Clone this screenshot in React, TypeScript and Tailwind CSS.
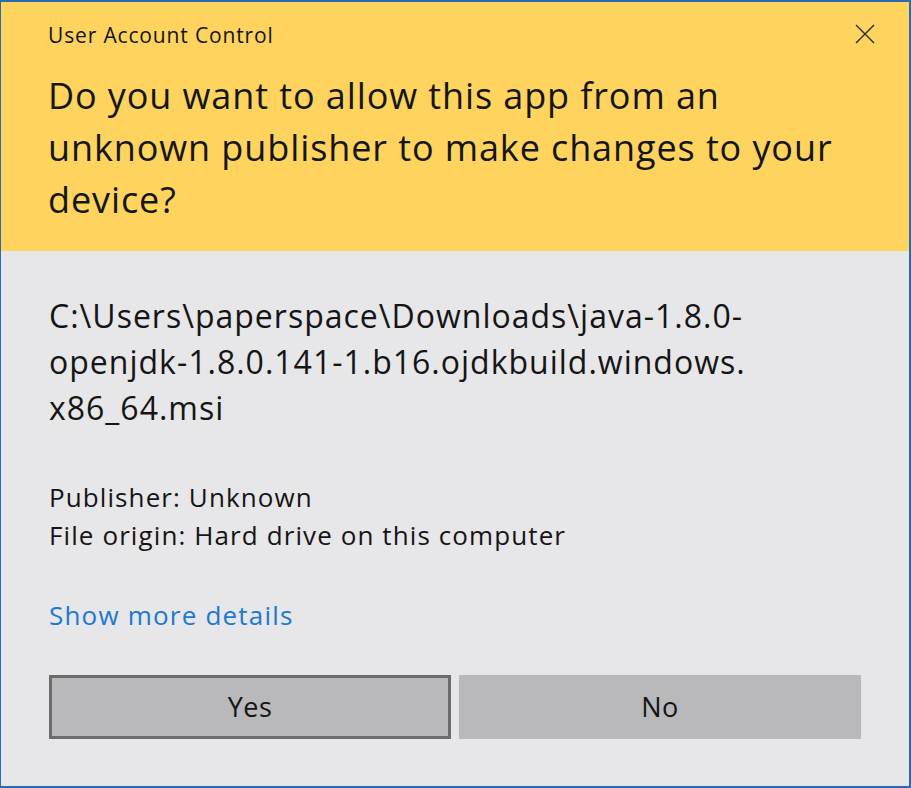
export default function App() {
  const font = { fontFamily: '"Open Sans", "Noto Sans", sans-serif' };
  return (
    <div className="w-[911px] h-[788px] bg-[#e7e6e8] border-2 border-l-[1px] border-[#2b6bb0] flex flex-col text-[#151515]" style={font}>
      <div className="bg-[#fed35e] pl-[47px] pr-[34px] pt-[19px] pb-[25px] flex flex-col">
        <div className="flex items-start justify-between">
          <div className="text-[21px] leading-[28px] tracking-[0.85px] whitespace-nowrap">User Account Control</div>
          <svg width="20" height="20" viewBox="0 0 20 20" className="mt-[3px]">
            <path d="M1 1 L19 19 M19 1 L1 19" stroke="#2a2a2a" strokeWidth="1.4" />
          </svg>
        </div>
        <div className="mt-[21px] text-[36px] leading-[52px] tracking-[0.9px] whitespace-nowrap">
          <div>Do you want to allow this app from an</div>
          <div>unknown publisher to make changes to your</div>
          <div>device?</div>
        </div>
      </div>
      <div className="flex-1 pl-[48px] pr-[48px] pt-[42px] flex flex-col">
        <div className="text-[32px] leading-[46px] tracking-[1px] whitespace-nowrap">
          <div>C:\Users\paperspace\Downloads\java-1.8.0-</div>
          <div>openjdk-1.8.0.141-1.b16.ojdkbuild.windows.</div>
          <div>x86_64.msi</div>
        </div>
        <div className="mt-[47px] text-[26px] leading-[38px] tracking-[1.1px] whitespace-nowrap">
          <div>Publisher: Unknown</div>
          <div>File origin: Hard drive on this computer</div>
        </div>
        <div className="mt-[42px] text-[26px] leading-[38px] tracking-[1.2px] text-[#1a7ad0] whitespace-nowrap">Show more details</div>
        <div className="mt-[41px] grid grid-cols-2 gap-[8px]">
          <button className="h-[64px] bg-[#b9b8ba] border-[3px] border-[#6c6c6c] text-[27px] tracking-[0.5px] text-[#151515]">Yes</button>
          <button className="h-[64px] bg-[#b9b8ba] text-[27px] tracking-[0.5px] text-[#151515]">No</button>
        </div>
      </div>
    </div>
  );
}
